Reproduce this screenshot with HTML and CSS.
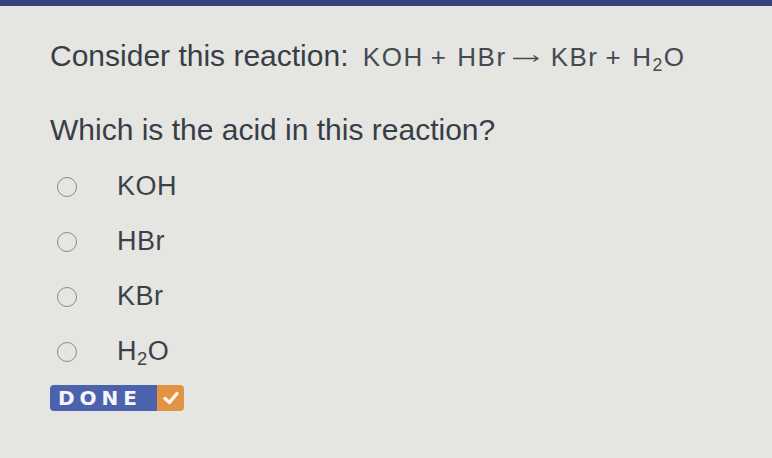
FILE: index.html
```html
<!DOCTYPE html>
<html>
<head>
<meta charset="utf-8">
<link rel="stylesheet" href="styles.css">
</head>
<body>
<div class="topbar"></div>
<main class="content">
  <p class="prompt">Consider this reaction: <span class="formula"><span class="sp">KOH</span><span class="op">+</span><span class="sp">HBr</span><span class="arrow"><svg width="28" height="10" viewBox="0 0 28 10"><path d="M1 5.5H26M21.5 2.5L26 5.5L21.5 8.5" fill="none" stroke="#454b53" stroke-width="1.3"/></svg></span><span class="sp">KBr</span><span class="op">+</span><span class="sp">H<sub>2</sub>O</span></span></p>
  <p class="question">Which is the acid in this reaction?</p>
  <ul class="options">
    <li class="option"><span class="radio"></span><span class="label">KOH</span></li>
    <li class="option"><span class="radio"></span><span class="label">HBr</span></li>
    <li class="option"><span class="radio"></span><span class="label">KBr</span></li>
    <li class="option"><span class="radio"></span><span class="label">H<sub>2</sub>O</span></li>
  </ul>
  <button class="done"><span class="done-text">DONE</span><span class="done-check"><svg width="18" height="16" viewBox="0 0 18 16"><path d="M3 8.5L7.5 12.5L15 3.5" fill="none" stroke="#fff6ec" stroke-width="3.4" stroke-linecap="round" stroke-linejoin="round"/></svg></span></button>
</main>
</body>
</html>
```
FILE: styles.css
```css
html, body {
  margin: 0;
  padding: 0;
}
body {
  width: 772px;
  height: 458px;
  overflow: hidden;
  background: #e5e5e1;
  font-family: "Liberation Sans", Arial, sans-serif;
  color: #383e47;
}
.topbar {
  height: 6px;
  background: #35447a;
}
.content {
  padding: 35px 0 0 50px;
}
.prompt {
  margin: 0;
  font-size: 30px;
  line-height: 30px;
  white-space: nowrap;
}
.formula {
  font-size: 26px;
  color: #444a52;
  margin-left: 6px;
  letter-spacing: 1.5px;
}
.formula .op {
  margin: 0 10px 0 7px;
}
.formula .arrow {
  display: inline-block;
  margin: 0 11px 0 5px;
  vertical-align: 3px;
}
.formula .arrow svg {
  display: block;
}
sub {
  font-size: 0.68em;
  vertical-align: -0.28em;
  line-height: 0;
}
.question {
  margin: 43px 0 0 0;
  font-size: 30px;
  line-height: 30px;
}
.options {
  list-style: none;
  margin: 14px 0 0 0;
  padding: 0;
}
.option {
  display: flex;
  align-items: center;
  height: 55px;
}
.radio {
  width: 18px;
  height: 18px;
  border: 1.8px solid #858a94;
  border-radius: 50%;
  margin-left: 7px;
  margin-right: 40px;
  box-sizing: content-box;
}
.label {
  font-size: 27px;
  line-height: 27px;
  color: #3b414a;
  letter-spacing: 0.5px;
}
.done {
  display: flex;
  margin: 6px 0 0 0;
  padding: 0;
  border: none;
  height: 26px;
  border-radius: 4px;
  overflow: hidden;
  font-family: "DejaVu Sans", sans-serif;
}
.done-text {
  background: #4d62ad;
  color: #f4f6fb;
  font-weight: bold;
  font-size: 20px;
  letter-spacing: 5px;
  line-height: 26px;
  width: 107px;
  padding-left: 8px;
  box-sizing: border-box;
  text-align: left;
  white-space: nowrap;
}
.done-check {
  background: #e39343;
  width: 27px;
  display: flex;
  align-items: center;
  justify-content: center;
}
```
